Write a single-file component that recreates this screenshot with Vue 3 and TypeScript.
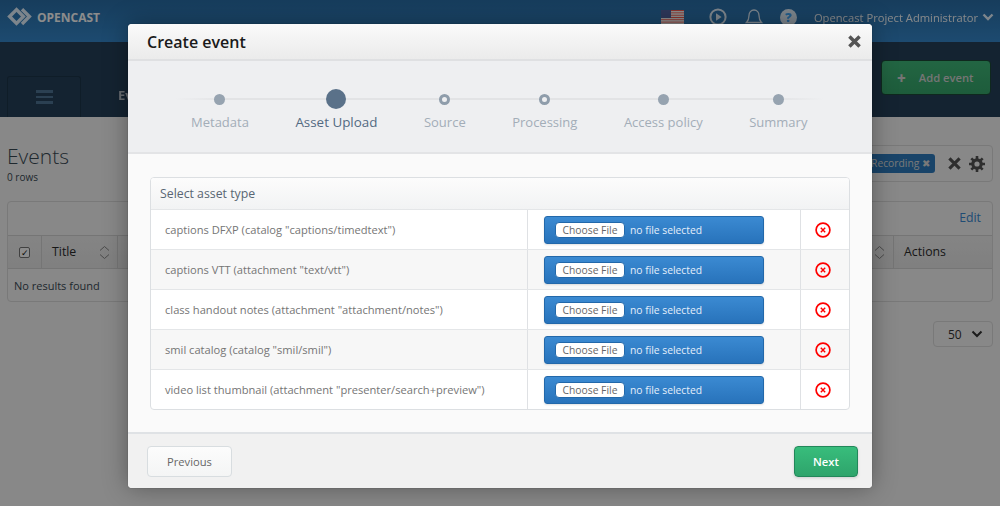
<script setup lang="ts">
const steps = [
  { label: 'Metadata', kind: 'done' },
  { label: 'Asset Upload', kind: 'active' },
  { label: 'Source', kind: 'open' },
  { label: 'Processing', kind: 'open' },
  { label: 'Access policy', kind: 'done' },
  { label: 'Summary', kind: 'done' },
]

const assets = [
  'captions DFXP (catalog "captions/timedtext")',
  'captions VTT (attachment "text/vtt")',
  'class handout notes (attachment "attachment/notes")',
  'smil catalog (catalog "smil/smil")',
  'video list thumbnail (attachment "presenter/search+preview")',
]

const stripes = [0, 2, 4, 6, 8, 10, 12]
</script>

<template>
  <div class="page">
    <header class="topbar">
      <div class="brand">
        <svg width="26" height="20" viewBox="0 0 26 20" fill="none" stroke="#a9b4bd" stroke-width="3.4">
          <path d="M9.5 2.6 2.6 9.5l6.9 6.9 6.9-6.9z" />
          <path d="M15 2.2 22.4 9.5 15 17" />
        </svg>
        <span>OPENCAST</span>
      </div>
      <div class="top-right">
        <svg class="flag" width="23" height="15" viewBox="0 0 23 15">
          <rect width="23" height="15" fill="#e6e6e6" />
          <rect v-for="s in stripes" :key="s" y="0" :transform="`translate(0 ${s * 1.15})`" width="23" height="1.15" fill="#c8463f" />
          <rect width="10" height="8" fill="#3d4a78" />
        </svg>
        <svg class="play" width="20" height="20" viewBox="0 0 20 20" fill="none" stroke="#a9b4bd" stroke-width="2">
          <circle cx="10" cy="10" r="7.6" />
          <path d="M8 6.2 13.6 10 8 13.8z" fill="#a9b4bd" stroke="none" />
        </svg>
        <svg class="bell" width="18" height="20" viewBox="0 0 18 20" fill="none" stroke="#a9b4bd" stroke-width="1.3">
          <path d="M1.5 15.5c2-2 2.500-3.500 2.500-7 0-3 2-5.500 5-5.500s5 2.500 5 5.500c0 3.500.5 5 2.500 7z" />
          <path d="M7 17.500c.5 1 3.500 1 4 0" />
        </svg>
        <span class="help">?</span>
        <span class="user">Opencast Project Administrator</span>
        <svg class="user-caret" width="12" height="8" viewBox="0 0 12 8" fill="none" stroke="#a9b4bd" stroke-width="2.400">
          <path d="M1.500 1.500 6 6l4.500-4.500" />
        </svg>
      </div>
    </header>

    <nav class="subnav">
      <div class="menu-btn"><i /><i /><i /></div>
      <span class="nav-item">Events</span>
      <div class="add-btn"><b>+</b><span>Add event</span></div>
    </nav>

    <main class="content">
      <div class="title-row">
        <div>
          <h1>Events</h1>
          <p>0 rows</p>
        </div>
        <div class="filters">
          <span class="chip">Recording ✖</span>
          <svg class="clear" width="13" height="13" viewBox="0 0 14 14" stroke="#555" stroke-width="3.400">
            <path d="M1.500 1.500l11 11M12.500 1.500l-11 11" />
          </svg>
          <svg width="16" height="16" viewBox="0 0 16 16" fill="none" stroke="#555">
            <circle cx="8" cy="8" r="4.200" stroke-width="3.200" />
            <path d="M8 0v3M8 13v3M0 8h3M13 8h3M2.300 2.300l2.100 2.100M11.600 11.600l2.100 2.100M13.700 2.300l-2.100 2.100M4.400 11.600l-2.100 2.100" stroke-width="2.600" />
          </svg>
        </div>
      </div>
      <div class="grid-box">
        <div class="grid-top">Edit</div>
        <div class="grid-head">
          <div class="cell-check"><span class="check">✓</span></div>
          <div class="cell-title">
            <span>Title</span>
            <svg width="11" height="15" viewBox="0 0 11 15" fill="none" stroke="#888">
              <path d="M1 5.500 5.500 1.500 10 5.500M1 9.500l4.500 4 4.500-4" />
            </svg>
          </div>
          <div class="cell-fill">
            <svg width="11" height="15" viewBox="0 0 11 15" fill="none" stroke="#888">
              <path d="M1 5.500 5.500 1.500 10 5.500M1 9.500l4.500 4 4.500-4" />
            </svg>
          </div>
          <div class="cell-actions">Actions</div>
        </div>
        <div class="grid-empty">No results found</div>
      </div>
      <div class="pager">
        <div class="page-size">
          <span>50</span>
          <svg width="12" height="8" viewBox="0 0 12 8" fill="none" stroke="#333" stroke-width="2">
            <path d="M1.500 1.500 6 6l4.500-4.500" />
          </svg>
        </div>
      </div>
    </main>

    <div class="overlay" />

    <section class="modal">
      <header class="modal-head">
        <h2>Create event</h2>
        <svg width="13" height="13" viewBox="0 0 12 12" stroke="#555" stroke-width="3.200">
          <path d="M1.300 1.300l9.400 9.400M10.700 1.300l-9.400 9.400" />
        </svg>
      </header>

      <div class="wizard">
        <div class="wizard-line" />
        <div v-for="step in steps" :key="step.label" class="step" :class="step.kind">
          <div class="dot-wrap"><span class="dot" /></div>
          <span class="step-label">{{ step.label }}</span>
        </div>
      </div>

      <div class="modal-body">
        <div class="asset-box">
          <div class="asset-head">Select asset type</div>
          <div v-for="asset in assets" :key="asset" class="asset-row">
            <div class="asset-name">{{ asset }}</div>
            <div class="asset-file">
              <div class="file-control">
                <span class="choose">Choose File</span>
                <span class="no-file">no file selected</span>
              </div>
            </div>
            <div class="asset-remove">
              <svg width="16" height="16" viewBox="0 0 16 16" fill="none" stroke="#f00">
                <circle cx="8" cy="8" r="6.900" stroke-width="1.700" />
                <path d="M5.800 5.800l4.400 4.400M10.200 5.800l-4.400 4.400" stroke-width="1.400" />
              </svg>
            </div>
          </div>
        </div>
      </div>

      <footer class="modal-foot">
        <button class="btn-prev" type="button">Previous</button>
        <button class="btn-next" type="button">Next</button>
      </footer>
    </section>
  </div>
</template>

<style>
html,
body {
  margin: 0;
  background: #888;
}
</style>

<style scoped>
.page {
  position: relative;
  width: 1000px;
  height: 506px;
  overflow: hidden;
  background: #f8f8f8;
  font-family: 'Open Sans', sans-serif;
  color: #3a4a55;
}

.topbar {
  height: 42px;
  box-sizing: border-box;
  display: flex;
  justify-content: space-between;
  align-items: center;
  padding: 0 6px 8px 7px;
  background: linear-gradient(#2a6fa8, #3588cc);
}
.brand {
  display: flex;
  align-items: center;
  gap: 4px;
  color: #fff;
  font-size: 12px;
  font-weight: 700;
}
.brand span,
.user {
  color: #ffffff;
}
.brand svg,
.top-right svg,
.help {
  filter: brightness(1.35);
}
.top-right {
  display: flex;
  align-items: center;
}
.flag {
  margin-right: 24px;
}
.play {
  margin-right: 17px;
}
.bell {
  margin-right: 17px;
}
.help {
  width: 17px;
  height: 17px;
  margin-right: 17px;
  border-radius: 50%;
  background: #a9b4bd;
  color: #2f7dc0;
  font-size: 13px;
  font-weight: 800;
  line-height: 17px;
  text-align: center;
}
.user {
  margin-right: 4px;
  font-size: 11.200px;
  opacity: 0.95;
}

.subnav {
  height: 75px;
  display: flex;
  align-items: flex-end;
  padding: 0 9px 0 7px;
  background: #25405a;
}
.menu-btn {
  width: 74px;
  height: 41px;
  box-sizing: border-box;
  border: 1px solid #1d3549;
  border-bottom: 0;
  border-radius: 3px 3px 0 0;
  display: flex;
  flex-direction: column;
  align-items: center;
  justify-content: center;
  gap: 3px;
}
.menu-btn i {
  width: 17px;
  height: 2.500px;
  background: #4f7596;
}
.nav-item {
  margin: 0 0 13px 37px;
  color: #fff;
  font-size: 13px;
  font-weight: 700;
  opacity: 0.7;
}
.add-btn {
  margin: 0 0 22px auto;
  width: 110px;
  height: 35px;
  box-sizing: border-box;
  border: 1px solid #1c4a38;
  border-radius: 4px;
  background: linear-gradient(#3fb97a, #37a86c);
  color: #d5d5d5;
  display: flex;
  align-items: center;
  font-size: 11.200px;
  font-weight: 600;
}
.add-btn b {
  margin: 0 13px 0 15px;
  font-size: 15px;
}

.content {
  padding: 0 7px;
}
.title-row {
  height: 84px;
  display: flex;
  justify-content: space-between;
  align-items: flex-start;
}
.title-row h1 {
  margin: 26px 0 0;
  font-size: 21px;
  font-weight: 300;
  line-height: 26px;
}
.title-row p {
  margin: 1px 0 0;
  font-size: 10px;
  line-height: 14px;
}
.filters {
  margin-top: 28px;
  width: 300px;
  height: 37px;
  box-sizing: border-box;
  border: 1px solid #ddd;
  border-radius: 4px;
  display: flex;
  align-items: center;
  justify-content: flex-end;
  padding-right: 7px;
}
.chip {
  margin-right: 13px;
  padding: 0 5px;
  height: 19px;
  border-radius: 3px;
  background: #2f7dc0;
  color: #ddd;
  font-size: 10.300px;
  line-height: 19px;
}
.clear {
  margin-right: 8px;
}
.grid-box {
  height: 101px;
  box-sizing: border-box;
  border: 1px solid #ddd;
  border-radius: 4px;
}
.grid-top {
  height: 34px;
  box-sizing: border-box;
  padding-right: 11px;
  color: #3a8ad4;
  font-size: 12.300px;
  line-height: 31px;
  text-align: right;
  border-bottom: 1px solid #d5d5d5;
}
.grid-head {
  height: 33px;
  box-sizing: border-box;
  display: flex;
  background: linear-gradient(#f1f1f1, #e9e9e9);
  border-bottom: 1px solid #d5d5d5;
  color: #2b2b2b;
  font-size: 12.300px;
  font-weight: 500;
  line-height: 32px;
}
.cell-check {
  width: 34px;
  box-sizing: border-box;
  display: flex;
  align-items: center;
  justify-content: center;
  border-right: 1px solid #d5d5d5;
}
.check {
  width: 11px;
  height: 11px;
  box-sizing: border-box;
  border: 1px solid #777;
  border-radius: 2px;
  background: #fff;
  color: #111;
  font-size: 9px;
  line-height: 9px;
  text-align: center;
}
.cell-title {
  width: 76px;
  box-sizing: border-box;
  padding: 0 7px 0 10px;
  display: flex;
  align-items: center;
  justify-content: space-between;
  border-right: 1px solid #d5d5d5;
}
.cell-fill {
  flex: 1;
  padding-right: 8px;
  display: flex;
  align-items: center;
  justify-content: flex-end;
}
.cell-actions {
  width: 99px;
  box-sizing: border-box;
  padding-left: 10px;
  border-left: 1px solid #d5d5d5;
}
.grid-empty {
  padding-left: 6px;
  font-size: 11px;
  line-height: 33px;
}
.pager {
  display: flex;
  justify-content: flex-end;
  margin-top: 19px;
}
.page-size {
  width: 60px;
  height: 26px;
  box-sizing: border-box;
  border: 1px solid #ddd;
  border-radius: 4px;
  display: flex;
  align-items: center;
  justify-content: space-between;
  padding: 0 9px 0 14px;
  color: #333;
  font-size: 12px;
}

.overlay {
  position: absolute;
  inset: 0;
  background: rgba(0, 0, 0, 0.45);
}

.modal {
  position: absolute;
  left: 128px;
  top: 24px;
  width: 744px;
  height: 464px;
  display: flex;
  flex-direction: column;
  border-radius: 4px;
  overflow: hidden;
  background: #fafafa;
  box-shadow: 0 0 24px rgba(0, 0, 0, 0.35), 0 0 1px rgba(0, 0, 0, 0.6);
}
.modal-head {
  height: 37px;
  flex: none;
  box-sizing: border-box;
  padding: 0 11px 0 19px;
  display: flex;
  align-items: center;
  justify-content: space-between;
  background: linear-gradient(#fafafa, #ebebeb);
  border-bottom: 2px solid #dfe0e2;
}
.modal-head h2 {
  margin: 0;
  color: #1a1a1a;
  font-size: 16px;
  font-weight: 600;
}

.wizard {
  position: relative;
  height: 93px;
  flex: none;
  box-sizing: border-box;
  padding-left: 63px;
  display: flex;
  gap: 46.500px;
  background: #eeeff1;
  border-bottom: 2px solid #e3e4e6;
}
.wizard-line {
  position: absolute;
  left: 47px;
  right: 47px;
  top: 37px;
  height: 2px;
  background: linear-gradient(90deg, #eeeff1, #e2e3e5 8%, #e2e3e5 92%, #eeeff1);
}
.step {
  position: relative;
  display: flex;
  flex-direction: column;
  align-items: center;
}
.dot-wrap {
  height: 52px;
  padding-top: 24px;
  box-sizing: border-box;
  display: flex;
  align-items: center;
}
.dot {
  width: 11px;
  height: 11px;
  box-sizing: border-box;
  border-radius: 50%;
  background: #96a3b0;
}
.step.active .dot {
  width: 20px;
  height: 20px;
  background: #5a7189;
}
.step.open .dot {
  background: #eeeff1;
  border: 3px solid #8f9dab;
}
.step-label {
  color: #a3adb8;
  font-size: 13px;
  line-height: 18px;
}
.step.active .step-label {
  color: #536a82;
  font-size: 13.400px;
  font-weight: 500;
}

.modal-body {
  flex: 1;
  padding: 23px 22px 0;
  background: #fafafa;
}
.asset-box {
  height: 233px;
  box-sizing: border-box;
  border: 1px solid #dcdfe2;
  border-radius: 4px;
  overflow: hidden;
  background: #fff;
}
.asset-head {
  height: 31px;
  box-sizing: border-box;
  padding-left: 9px;
  background: linear-gradient(#fcfcfc, #f2f3f4);
  color: #596673;
  font-size: 12.300px;
  font-weight: 500;
  line-height: 31px;
}
.asset-row {
  height: 40px;
  box-sizing: border-box;
  display: flex;
  border-top: 1px solid #e4e6e8;
  color: #757575;
  font-size: 11.130px;
  line-height: 40px;
}
.asset-row:nth-child(odd) {
  background: #f7f7f7;
}
.asset-name {
  width: 376px;
  padding-left: 14px;
  box-sizing: border-box;
}
.asset-file {
  width: 274px;
  box-sizing: border-box;
  padding: 6px 0 0 16px;
  border-left: 1px solid #dfe1e4;
  border-right: 1px solid #dfe1e4;
}
.file-control {
  width: 220px;
  height: 28px;
  box-sizing: border-box;
  padding-left: 10px;
  display: flex;
  align-items: center;
  gap: 5px;
  border: 1px solid #2268aa;
  border-radius: 3px;
  background: linear-gradient(#3b8ad2, #2873bb);
  box-shadow: 0 1px 2px rgba(0, 0, 0, 0.12);
}
.choose {
  width: 70px;
  height: 16px;
  box-sizing: border-box;
  border: 1px solid #2268aa;
  border-radius: 4px;
  background: #fff;
  color: #666;
  font-size: 10.300px;
  line-height: 14px;
  text-align: center;
}
.no-file {
  color: #e6effa;
  font-size: 10.300px;
}
.asset-remove {
  flex: 1;
  padding: 1px 4px 0 0;
  display: flex;
  align-items: center;
  justify-content: center;
}

.modal-foot {
  height: 56px;
  flex: none;
  box-sizing: border-box;
  padding: 12px 14px 0 19px;
  display: flex;
  justify-content: space-between;
  background: #f1f1f1;
  border-top: 2px solid #dfe2e5;
}
.modal-foot button {
  height: 31px;
  box-sizing: border-box;
  border-radius: 4px;
  font-family: inherit;
  font-size: 11.200px;
}
.btn-prev {
  width: 85px;
  border: 1px solid #d8dde0;
  background: linear-gradient(#fcfcfc, #f4f5f5);
  color: #666;
}
.btn-next {
  width: 64px;
  border: 1px solid #22875a;
  background: linear-gradient(#38bd7c, #2ea46b);
  color: #fff;
  font-weight: 600;
  box-shadow: 0 1px 3px rgba(0, 0, 0, 0.15);
}
</style>
